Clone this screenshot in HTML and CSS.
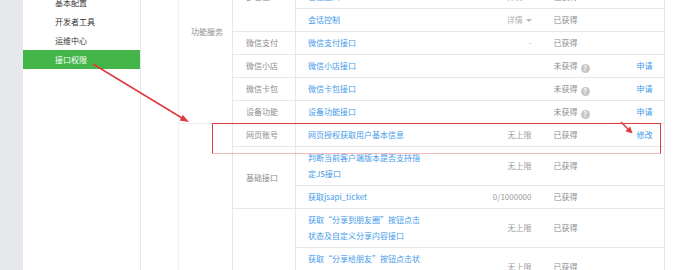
FILE: index.html
```html
<!DOCTYPE html>
<html lang="zh-CN">
<head>
    <meta charset="UTF-8">
    <title>接口权限</title>
    <link rel="stylesheet" href="styles.css">
</head>
<body>
<div class="page">
    <div class="gutter"></div>

    <nav class="sidebar">
        <ul class="menu">
            <li>基本配置</li>
            <li>开发者工具</li>
            <li>运维中心</li>
            <li class="active">接口权限</li>
        </ul>
    </nav>

    <main class="content">
        <table class="perm-table">
            <colgroup>
                <col class="c-cat">
                <col class="c-sub">
                <col class="c-name">
                <col class="c-quota">
                <col class="c-status">
                <col class="c-op">
            </colgroup>
            <tbody>
                <tr>
                    <td class="cat" rowspan="8">功能服务</td>
                    <td class="sub">智能接口</td>
                    <td class="name"><a href="#">语义理解接口</a></td>
                    <td class="quota">无上限</td>
                    <td class="status">已获得</td>
                    <td class="op"></td>
                </tr>
                <tr>
                    <td class="sub" rowspan="3">多客服</td>
                    <td class="name"><a href="#">获取客服聊天记录</a></td>
                    <td class="quota">详情 <span class="caret"></span></td>
                    <td class="status">已获得</td>
                    <td class="op"></td>
                </tr>
                <tr>
                    <td class="name"><a href="#">客服接口</a></td>
                    <td class="quota">详情 <span class="caret"></span></td>
                    <td class="status">已获得</td>
                    <td class="op"></td>
                </tr>
                <tr>
                    <td class="name"><a href="#">会话控制</a></td>
                    <td class="quota light">详情 <span class="caret"></span></td>
                    <td class="status">已获得</td>
                    <td class="op"></td>
                </tr>
                <tr>
                    <td class="sub">微信支付</td>
                    <td class="name"><a href="#">微信支付接口</a></td>
                    <td class="quota light">-</td>
                    <td class="status">已获得</td>
                    <td class="op"></td>
                </tr>
                <tr>
                    <td class="sub">微信小店</td>
                    <td class="name"><a href="#">微信小店接口</a></td>
                    <td class="quota"></td>
                    <td class="status">未获得<span class="tip">?</span></td>
                    <td class="op"><a href="#">申请</a></td>
                </tr>
                <tr>
                    <td class="sub">微信卡包</td>
                    <td class="name"><a href="#">微信卡包接口</a></td>
                    <td class="quota"></td>
                    <td class="status">未获得<span class="tip">?</span></td>
                    <td class="op"><a href="#">申请</a></td>
                </tr>
                <tr>
                    <td class="sub">设备功能</td>
                    <td class="name"><a href="#">设备功能接口</a></td>
                    <td class="quota"></td>
                    <td class="status">未获得<span class="tip">?</span></td>
                    <td class="op"><a href="#">申请</a></td>
                </tr>
                <tr>
                    <td class="cat" rowspan="8"></td>
                    <td class="sub">网页账号</td>
                    <td class="name"><a href="#">网页授权获取用户基本信息</a></td>
                    <td class="quota">无上限</td>
                    <td class="status">已获得</td>
                    <td class="op"><a href="#">修改</a></td>
                </tr>
                <tr>
                    <td class="sub" rowspan="2">基础接口</td>
                    <td class="name"><a href="#">判断当前客户端版本是否支持指定JS接口</a></td>
                    <td class="quota">无上限</td>
                    <td class="status">已获得</td>
                    <td class="op"></td>
                </tr>
                <tr>
                    <td class="name"><a href="#">获取jsapi_ticket</a></td>
                    <td class="quota">0/1000000</td>
                    <td class="status">已获得</td>
                    <td class="op"></td>
                </tr>
                <tr>
                    <td class="sub" rowspan="5">分享接口</td>
                    <td class="name"><a href="#">获取“分享到朋友圈”按钮点击状态及自定义分享内容接口</a></td>
                    <td class="quota">无上限</td>
                    <td class="status">已获得</td>
                    <td class="op"></td>
                </tr>
                <tr>
                    <td class="name"><a href="#">获取“分享给朋友”按钮点击状态及自定义分享内容接口</a></td>
                    <td class="quota">无上限</td>
                    <td class="status">已获得</td>
                    <td class="op"></td>
                </tr>
                <tr>
                    <td class="name"><a href="#">获取“分享到QQ”按钮点击状态及自定义分享内容接口</a></td>
                    <td class="quota">无上限</td>
                    <td class="status">已获得</td>
                    <td class="op"></td>
                </tr>
                <tr>
                    <td class="name"><a href="#">获取“分享到腾讯微博”按钮点击状态及自定义分享内容接口</a></td>
                    <td class="quota">无上限</td>
                    <td class="status">已获得</td>
                    <td class="op"></td>
                </tr>
                <tr>
                    <td class="name"><a href="#">获取“分享到QQ空间”按钮点击状态及自定义分享内容接口</a></td>
                    <td class="quota">无上限</td>
                    <td class="status">已获得</td>
                    <td class="op"></td>
                </tr>
            </tbody>
        </table>
    </main>

    <!-- 标注 -->
    <div class="mark-box"></div>
    <svg class="arrows" width="698" height="270" viewBox="0 0 698 270">
        <line x1="93" y1="64" x2="182" y2="118" stroke="#e0393e" stroke-width="1.5"/>
        <polygon points="189,122 179.6,120.6 182.9,115" fill="#e0393e"/>
        <line x1="621" y1="122" x2="628" y2="129" stroke="#e0393e" stroke-width="1.5"/>
        <polygon points="632.5,133.5 625.4,131.2 630.2,126.4" fill="#e0393e"/>
    </svg>
</div>
</body>
</html>
```

FILE: styles.css
```css
html, body {
    margin: 0;
    height: 100%;
    overflow: hidden;
    background: #fff;
}

body {
    font-family: "Noto Sans CJK SC", "Noto Sans", sans-serif;
    font-size: 8px;
    color: #8d8d8d;
}

.page {
    position: relative;
    display: flex;
    height: 270px;
}

.gutter {
    width: 23px;
    flex-shrink: 0;
    background: #e7e8eb;
}

.sidebar {
    width: 117px;
    flex-shrink: 0;
    border-right: 1px solid #e7e7eb;
}

.menu {
    list-style: none;
    margin: -7px 0 0;
    padding: 0;
}

.menu li {
    height: 19px;
    line-height: 19px;
    padding-left: 32px;
    color: #353535;
}

.menu li.active {
    background: #44b549;
    color: #fff;
}

.content {
    flex: 1;
    padding-left: 37px;
}

.perm-table {
    border-collapse: collapse;
    table-layout: fixed;
    width: 486px;
    margin-top: -61px;
}

.c-cat { width: 54px; }
.c-sub { width: 63px; }
.c-name { width: 137px; }
.c-quota { width: 111px; }
.c-status { width: 83px; }
.c-op { width: 38px; }

.perm-table td {
    padding: 3px 12px;
    line-height: 16px;
    border-top: 1px solid #e7e7eb;
    border-bottom: 1px solid #e7e7eb;
    vertical-align: middle;
    color: #8d8d8d;
}

.perm-table a {
    color: #459ae9;
    text-decoration: none;
}

.perm-table td.cat {
    padding-right: 2px;
    white-space: nowrap;
    border-left: 1px solid #f1f1f3;
    border-right: 1px solid #e7e7eb;
    border-bottom-color: #f1f1f3;
}

.perm-table td.sub {
    padding-left: 13px;
    padding-right: 4px;
    white-space: nowrap;
    border-right: 1px solid #e7e7eb;
}

.perm-table td.quota {
    text-align: right;
    padding-right: 12px;
    color: #9a9a9a;
}

.perm-table td.light {
    color: #b0b0b0;
}

.caret {
    display: inline-block;
    width: 0;
    height: 0;
    margin-left: 1px;
    border-left: 3px solid transparent;
    border-right: 3px solid transparent;
    border-top: 3px solid #b8b8b8;
    vertical-align: middle;
}

.perm-table td.status {
    padding-left: 10px;
    padding-right: 4px;
}

.tip {
    display: inline-block;
    width: 9px;
    height: 9px;
    margin-left: 3px;
    border-radius: 50%;
    background: #c6c6c6;
    color: #fff;
    font-size: 7px;
    font-weight: bold;
    line-height: 9px;
    text-align: center;
    vertical-align: -2px;
}

.perm-table td.op {
    padding-left: 10px;
    padding-right: 2px;
    border-right: 1px solid #e7e7eb;
}

/* 红色标注 */
.mark-box {
    position: absolute;
    left: 212px;
    top: 123px;
    width: 447px;
    height: 29px;
    border: 1px solid #e0393e;
    border-bottom-color: rgba(224, 57, 62, 0.35);
}

.arrows {
    position: absolute;
    left: 0;
    top: 0;
    pointer-events: none;
}
```
